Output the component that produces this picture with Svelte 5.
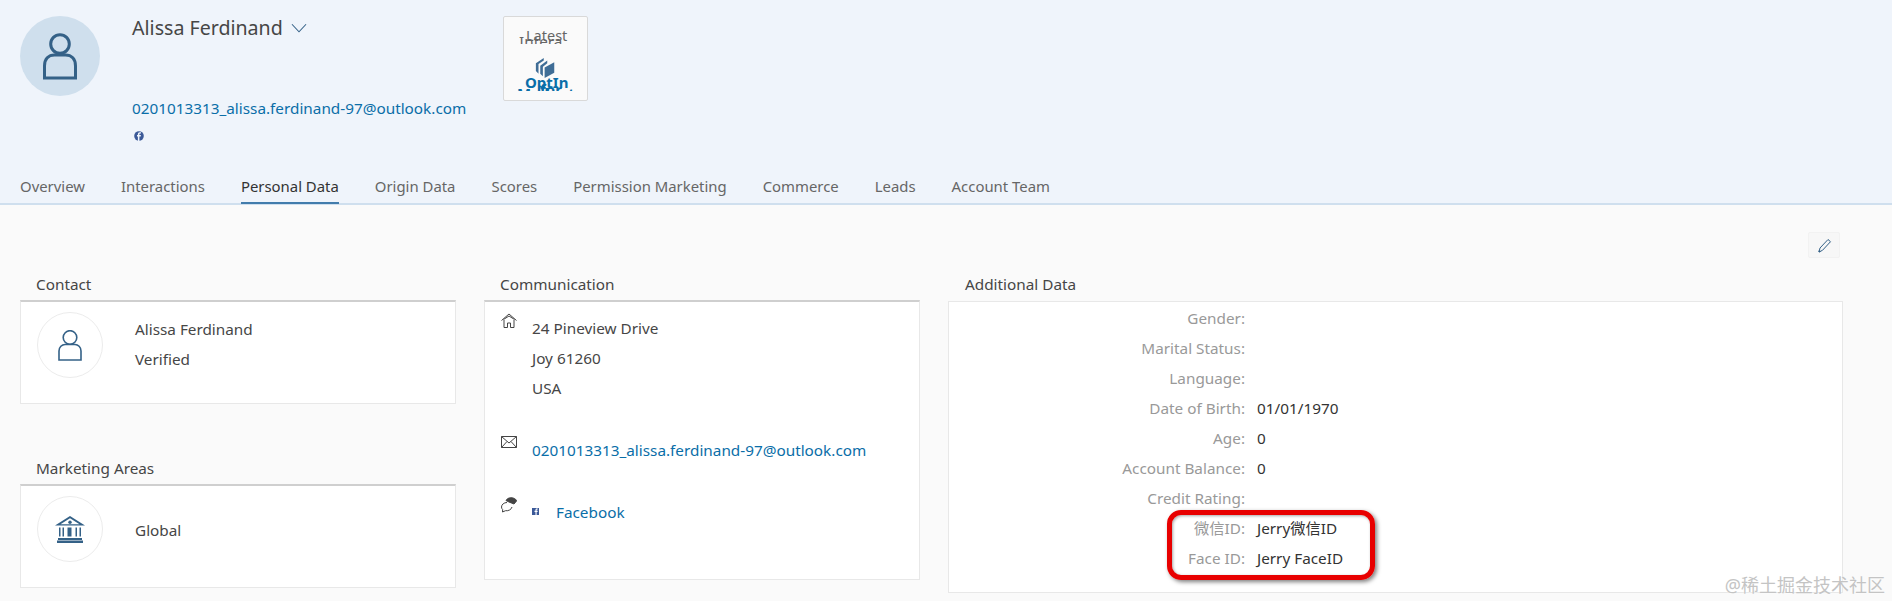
<script>
  const tabs = ["Overview", "Interactions", "Personal Data", "Origin Data", "Scores", "Permission Marketing", "Commerce", "Leads", "Account Team"];
  const fields = [
    ["Gender:", ""],
    ["Marital Status:", ""],
    ["Language:", ""],
    ["Date of Birth:", "01/01/1970"],
    ["Age:", "0"],
    ["Account Balance:", "0"],
    ["Credit Rating:", ""],
    ["微信ID:", "Jerry微信ID"],
    ["Face ID:", "Jerry FaceID"],
  ];
</script>

<div class="page">
  <header class="head">
    <div class="head-top">
      <div class="avatar">
        <svg width="36" height="47" viewBox="0 0 36 47" fill="none" stroke="#346187" stroke-width="3">
          <circle cx="18" cy="11" r="9.3" />
          <path d="M2.500 45V33c0-7 4-11 10-11h11c6 0 10 4 10 11v12z" />
        </svg>
      </div>
      <div class="identity">
        <div class="name">
          Alissa Ferdinand
          <svg class="chev" width="16" height="10" viewBox="0 0 17 10" fill="none" stroke="#346187" stroke-width="1.100"><path d="M1 1l7.500 8L16 1" /></svg>
        </div>
        <a class="link mail">0201013313_alissa.ferdinand-97@outlook.com</a>
        <svg class="fb-round" width="10" height="10" viewBox="0 0 10 10"><circle cx="5" cy="5" r="4.800" fill="#3b5998" /><path d="M5.400 10V5.600h1.300l.2-1.500H5.400v-.9c0-.5.2-.7.7-.7H7V1.200H5.800C4.500 1.200 3.900 2 3.900 3.100v1H3v1.500h.9V10z" fill="#eff4fb" /></svg>
      </div>
      <div class="mini">
        <span class="mini-a">Latest</span>
        <span class="mini-b">Intera</span>
        <svg class="mini-icon" width="21" height="21" viewBox="0 0 24 24" fill="#3f6d96">
          <path d="M1 7l9-6v3L4 8v11L1 16z" />
          <path d="M6 10l8-6v3l-5 4v11l-3-3z" />
          <path d="M11 12l11-6v12l-11 6z" />
        </svg>
        <b class="mini-c">OptIn</b>
        <b class="mini-d">for</b>
        <b class="mini-e">Mailout</b>
      </div>
    </div>
    <nav class="tabs">
      {#each tabs as tab}
        <span class="tab" class:active={tab === "Personal Data"}>{tab}</span>
      {/each}
    </nav>
  </header>

  <main class="body">
    <div class="toolbar">
      <button class="edit" aria-label="Edit">
        <svg width="15" height="15" viewBox="0 0 15 15" fill="none" stroke="#346187" stroke-width="1"><path d="M3 10L11 1.500l2.500 2.200L5.500 12.300 2 14z" /><path d="M2 14l.8-1.200" stroke-width="2" /></svg>
      </button>
    </div>
    <div class="columns">
      <div class="col">
        <section>
          <h2>Contact</h2>
          <div class="card ruled entity">
            <div class="disc">
              <svg width="24" height="31" viewBox="0 0 24 31" fill="none" stroke="#346187" stroke-width="1.600">
                <circle cx="12" cy="7.500" r="6.800" />
                <path d="M1 30V21c0-4 3-6.500 6-6.500h10c3 0 6 2.500 6 6.500v9z" />
              </svg>
            </div>
            <div class="lines">
              <div>Alissa Ferdinand</div>
              <div>Verified</div>
            </div>
          </div>
        </section>
        <section class="second">
          <h2>Marketing Areas</h2>
          <div class="card ruled entity">
            <div class="disc">
              <svg width="30" height="27" viewBox="0 0 30 27" fill="#346187">
                <path d="M15 0L30 9.500H0zM15 2.300L5.500 8.300h19z" fill-rule="evenodd" />
                <circle cx="15" cy="6.300" r="1.700" />
                <path d="M4 11.500h1.500v9H4zM7.500 11.500H9v9H7.500zM12.500 11.500h4v9h-4zM20.500 11.500H22v9h-1.500zM24.500 11.500H26v9h-1.500zM3 22h24v2H3zM2 24.500h26V27H2z" />
              </svg>
            </div>
            <div class="lines single"><div>Global</div></div>
          </div>
        </section>
      </div>

      <section class="col">
        <h2>Communication</h2>
        <div class="card ruled comm">
          <div class="comm-row address">
            <svg class="glyph" width="16" height="15" viewBox="0 0 16 15" fill="none" stroke="#444" stroke-width="1"><path d="M.5 7.500L8 1l7.500 6.500M2.500 6.500L8 3l5.500 3.500M3 7v7.500h3.500V10h3v4.500H13V7" /></svg>
            <div class="lines">
              <div>24 Pineview Drive</div>
              <div>Joy 61260</div>
              <div>USA</div>
            </div>
          </div>
          <div class="comm-row email">
            <svg class="glyph" width="16" height="12" viewBox="0 0 16 12" fill="none" stroke="#444" stroke-width="1"><path d="M.5.500h15v11H.5zM.5.500L8 7l7.500-6.500M.5 11.500L6 5.500M15.500 11.500L10 5.500" /></svg>
            <a class="link">0201013313_alissa.ferdinand-97@outlook.com</a>
          </div>
          <div class="comm-row social">
            <svg class="glyph" width="16" height="16" viewBox="0 0 16 16" fill="none" stroke="#444" stroke-width="1"><path d="M6 5.500C3 5.500.5 7.500.5 10c0 1 .4 2 1.200 2.600L1.500 15l3-1.300c3 .5 6-1.300 6.500-3.700" /><path d="M5 3.500C6 1.500 9 0 12 1c2 .5 3.500 1.800 3.500 3L13 7 8 5z" fill="#444" /></svg>
            <svg class="fb-square" width="7" height="7" viewBox="0 0 7 7"><rect width="7" height="7" fill="#3b5998" /><path d="M4.600 7V4h1l.1-1.200H4.600V2.100c0-.3.100-.5.500-.5h.7V.6H5C4.100.6 3.500 1.100 3.500 2v.8h-1V4h1v3z" fill="#fff" /></svg>
            <a class="link">Facebook</a>
          </div>
        </div>
      </section>

      <section class="col wide">
        <h2>Additional Data</h2>
        <div class="card extra">
          {#each fields as [label, value]}
            <div class="field">
              <span class="label">{label}</span>
              <span class="value">{value}</span>
            </div>
          {/each}
          <div class="callout"></div>
        </div>
      </section>
    </div>
  </main>

  <div class="watermark">@稀土掘金技术社区</div>
</div>

<style>
  :global(body) {
    margin: 0;
    background: #fafafa;
  }

  .page {
    position: relative;
    height: 601px;
    overflow: hidden;
    font-family: "Noto Sans", "Noto Sans CJK SC", sans-serif;
    font-size: 15.3px;
    color: #464646;
    background: #fafafa;
  }

  .head {
    box-sizing: border-box;
    height: 205px;
    background: #eff4fb;
    border-bottom: 2px solid #cfdfee;
  }

  .head-top {
    height: 177px;
    box-sizing: border-box;
    padding: 16px 0 0 20px;
    display: flex;
  }

  .avatar {
    flex: none;
    width: 80px;
    height: 80px;
    border-radius: 50%;
    background: #cfdfed;
    display: flex;
    align-items: center;
    justify-content: center;
  }

  .identity {
    flex: none;
    width: 371px;
    margin-left: 32px;
    display: flex;
    flex-direction: column;
    align-items: flex-start;
  }

  .name {
    font-size: 19.6px;
    line-height: 24px;
    display: flex;
    align-items: center;
    gap: 8px;
  }

  .mail {
    margin-top: 56px;
    line-height: 24px;
  }

  .fb-round {
    margin: 11px 0 0 2px;
  }

  .link {
    color: #0a6ea8;
  }

  .mini {
    position: relative;
    flex: none;
    width: 85px;
    height: 85px;
    box-sizing: border-box;
    background: #fafafa;
    border: 1px solid #d9d9d9;
    border-radius: 2px;
    overflow: hidden;
  }

  .mini span,
  .mini b,
  .mini svg {
    position: absolute;
    line-height: 18px;
  }

  .mini-a { left: 22px; top: 9px; color: #666; font-size: 14.5px; }
  .mini-b { left: 15px; top: 15px; height: 12px; overflow: hidden; color: #666; font-size: 15.3px; }
  .mini-icon { left: 31px; top: 40px; }
  .mini-c { left: 21px; top: 56px; color: #0a6ea8; font-size: 15px; }
  .mini-d { left: 36px; top: 63px; height: 11px; overflow: hidden; color: #0a6ea8; font-size: 15px; }
  .mini-e { left: 13px; top: 67px; height: 7px; overflow: hidden; color: #0a6ea8; font-size: 15px; }

  .tabs {
    height: 26px;
    display: flex;
    gap: 36px;
    padding-left: 20px;
  }

  .tab {
    font-size: 14.9px;
    line-height: 18px;
    height: 25px;
    color: #666;
    white-space: nowrap;
  }

  .tab.active {
    color: #333;
    border-bottom: 2px solid #427cac;
  }

  .body {
    padding: 0 49px 0 20px;
  }

  .toolbar {
    display: flex;
    justify-content: flex-end;
    padding: 27px 3px 0 0;
    height: 30px;
  }

  .edit {
    width: 32px;
    height: 26px;
    padding: 0;
    display: flex;
    align-items: center;
    justify-content: center;
    background: #f7f7f7;
    border: 1px solid #f2f2f2;
    border-radius: 2px;
  }

  .columns {
    margin-top: 10px;
    display: grid;
    grid-template-columns: 436px 436px 895px;
    column-gap: 28px;
  }

  h2 {
    margin: 0;
    padding-left: 16px;
    height: 28px;
    font-size: 15.3px;
    font-weight: 400;
    line-height: 24px;
    color: #464646;
  }

  .second {
    margin-top: 52px;
  }

  .col.wide h2 {
    padding-left: 17px;
    height: 29px;
  }

  .card {
    box-sizing: border-box;
    background: #fff;
    border: 1px solid #e8e8e8;
  }

  .ruled {
    border-top: 2px solid #cfcfcf;
  }

  .entity {
    height: 104px;
    padding: 10px 16px;
    display: flex;
    gap: 32px;
  }

  .disc {
    flex: none;
    box-sizing: border-box;
    width: 66px;
    height: 66px;
    border: 1px solid #ececec;
    border-radius: 50%;
    display: flex;
    align-items: center;
    justify-content: center;
  }

  .lines {
    line-height: 30px;
    padding-top: 2px;
  }

  .lines.single {
    padding-top: 19px;
  }

  .comm {
    height: 280px;
    padding: 11px 16px;
  }

  .comm-row {
    display: flex;
    align-items: flex-start;
  }

  .glyph {
    flex: none;
    width: 16px;
    margin-right: 15px;
  }

  .address .lines {
    padding-top: 0;
  }

  .email {
    margin-top: 32px;
    line-height: 30px;
  }

  .email .glyph { margin-top: 1px; }

  .social {
    margin-top: 32px;
    line-height: 30px;
  }

  .fb-square {
    margin: 11px 17px 0 0;
  }

  .extra {
    position: relative;
    height: 292px;
    padding-top: 1px;
  }

  .field {
    display: grid;
    grid-template-columns: 296px 1fr;
    column-gap: 12px;
    line-height: 30px;
    height: 30px;
    white-space: nowrap;
  }

  .label {
    text-align: right;
    color: #999;
  }

  .value {
    color: #333;
  }

  .callout {
    position: absolute;
    left: 218px;
    top: 208px;
    width: 198px;
    height: 60px;
    border: 5px solid #e80000;
    border-radius: 14px;
    box-shadow: 2px 2px 4px rgba(0, 0, 0, 0.5), inset 1px 1px 3px rgba(0, 0, 0, 0.35);
  }

  .watermark {
    position: absolute;
    right: 7px;
    bottom: 4px;
    font-size: 18px;
    line-height: 24px;
    color: #c4c4c4;
    text-shadow: 0 0 2px #fff;
    white-space: nowrap;
  }
</style>
